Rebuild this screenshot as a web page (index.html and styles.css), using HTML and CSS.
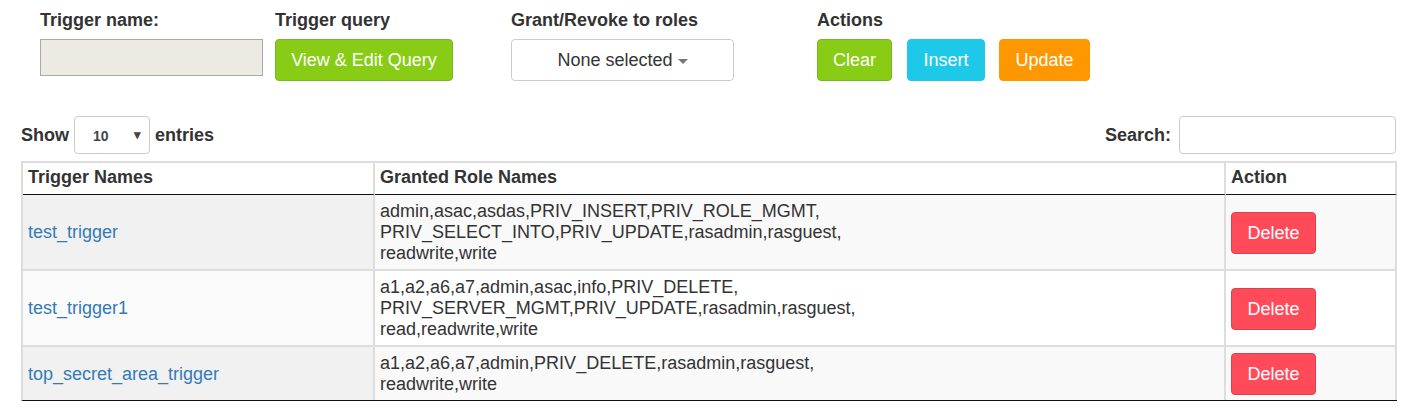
FILE: index.html
```html
<!DOCTYPE html>
<html>
<head>
<meta charset="utf-8">
<link rel="stylesheet" href="styles.css">
</head>
<body>
<div class="form-row">
  <div class="field f-name">
    <div class="lbl">Trigger name:</div>
    <input class="name-input" type="text" disabled>
  </div>
  <div class="field f-query">
    <div class="lbl">Trigger query</div>
    <button class="btn btn-green">View &amp; Edit Query</button>
  </div>
  <div class="field f-roles">
    <div class="lbl">Grant/Revoke to roles</div>
    <button class="multi">None selected <span class="caret"></span></button>
  </div>
  <div class="field f-actions">
    <div class="lbl">Actions</div>
    <div class="act-btns">
      <button class="btn btn-green btn-clear">Clear</button>
      <button class="btn btn-cyan btn-insert">Insert</button>
      <button class="btn btn-orange btn-update">Update</button>
    </div>
  </div>
</div>

<div class="dt-wrap">
  <div class="dt-top">
    <div class="length">Show <span class="sel"><span class="sel-val">10</span><span class="sel-arrow">&#9662;</span></span> entries</div>
    <div class="search">Search: <input class="search-input" type="text"></div>
  </div>
  <table class="dt">
    <colgroup>
      <col class="c1"><col class="c2"><col class="c3">
    </colgroup>
    <thead>
      <tr><th>Trigger Names</th><th>Granted Role Names</th><th>Action</th></tr>
    </thead>
    <tbody>
      <tr class="odd">
        <td class="sorted"><a href="#">test_trigger</a></td>
        <td>admin,asac,asdas,PRIV_INSERT,PRIV_ROLE_MGMT,<br>PRIV_SELECT_INTO,PRIV_UPDATE,rasadmin,rasguest,<br>readwrite,write</td>
        <td><button class="btn btn-red">Delete</button></td>
      </tr>
      <tr class="even">
        <td class="sorted"><a href="#">test_trigger1</a></td>
        <td>a1,a2,a6,a7,admin,asac,info,PRIV_DELETE,<br>PRIV_SERVER_MGMT,PRIV_UPDATE,rasadmin,rasguest,<br>read,readwrite,write</td>
        <td><button class="btn btn-red">Delete</button></td>
      </tr>
      <tr class="odd">
        <td class="sorted"><a href="#">top_secret_area_trigger</a></td>
        <td>a1,a2,a6,a7,admin,PRIV_DELETE,rasadmin,rasguest,<br>readwrite,write</td>
        <td><button class="btn btn-red">Delete</button></td>
      </tr>
    </tbody>
  </table>
</div>
</body>
</html>
```
FILE: styles.css
```css
* { box-sizing: border-box; }
body {
  margin: 0;
  font-family: "Liberation Sans", Arial, sans-serif;
  font-size: 18px;
  line-height: 21px;
  color: #333;
  background: #fff;
}
.form-row {
  display: flex;
  padding: 10px 0 0 40px;
}
.field { display: flex; flex-direction: column; }
.lbl {
  font-weight: bold;
  font-size: 18px;
  line-height: 20px;
  height: 20px;
  margin-bottom: 9px;
}
.f-name { width: 223px; margin-right: 12px; }
.f-query { width: 178px; margin-right: 58px; }
.f-roles { width: 223px; margin-right: 83px; }
.name-input {
  width: 223px;
  height: 37px;
  margin: 0;
  background: #ebebe4;
  border: 1px solid #a9a9a9;
  padding: 0 6px;
}
.btn {
  font-family: "Liberation Sans", Arial, sans-serif;
  font-size: 18px;
  line-height: 20px;
  color: #fff;
  height: 42px;
  padding: 0 15px;
  border-radius: 4px;
  border: 1px solid transparent;
  margin: 0;
  cursor: pointer;
}
.btn-green { background: #88cc16; border-color: #76b727; }
.btn-cyan { background: #1ec8e9; border-color: #1ec8e9; }
.btn-orange { background: #ff9701; border-color: #ff9701; }
.btn-red { background: #ff4a5a; border-color: #d9434e; }
.f-query .btn { width: 178px; padding: 0; }
.multi {
  width: 223px;
  height: 42px;
  margin: 0;
  background: #fff;
  border: 1px solid #ccc;
  border-radius: 4px;
  font-family: "Liberation Sans", Arial, sans-serif;
  font-size: 18px;
  color: #333;
  display: flex;
  align-items: center;
  justify-content: center;
  padding: 0;
}
.caret {
  display: inline-block;
  width: 0;
  height: 0;
  margin-left: 5px;
  margin-top: 2px;
  border-top: 5px solid #777;
  border-left: 5px solid transparent;
  border-right: 5px solid transparent;
}
.act-btns { display: flex; }
.btn-clear { width: 75px; padding: 0; margin-right: 15px; }
.btn-insert { width: 78px; padding: 0; margin-right: 14px; }
.btn-update { width: 91px; padding: 0; }

.dt-wrap { margin: 35px 6px 0 21px; }
.dt-top {
  display: flex;
  justify-content: space-between;
  align-items: center;
  height: 38px;
  font-weight: bold;
  font-size: 18px;
}
.length { display: flex; align-items: center; }
.sel {
  display: inline-flex;
  align-items: center;
  width: 76px;
  height: 38px;
  margin: 0 5px;
  border: 1px solid #ccc;
  border-radius: 4px;
  font-size: 14px;
  color: #444;
  padding: 2px 8px 0 18px;
  justify-content: space-between;
}
.sel-arrow { font-size: 13px; color: #444; margin-top: -3px; }
.search { display: flex; align-items: center; }
.search-input {
  width: 217px;
  height: 38px;
  margin: 0 0 0 8px;
  border: 1px solid #ccc;
  border-radius: 4px;
}
.dt {
  margin-top: 7px;
  width: 1374px;
  border-collapse: separate;
  border-spacing: 0;
  table-layout: fixed;
  border-left: 2px solid #ddd;
  border-bottom: 1px solid #111;
}
.c1 { width: 352px; }
.c2 { width: 851px; }
.c3 { width: 171px; }
.dt th {
  text-align: left;
  font-weight: bold;
  padding: 4px 5px 6px;
  border-top: 2px solid #ddd;
  border-right: 2px solid #ddd;
  border-bottom: 1px solid #111;
  background: #fff;
}
.dt td {
  padding: 6px 5px 5px;
  border-right: 2px solid #ddd;
  border-top: 2px solid #ddd;
  vertical-align: middle;
}
.dt tbody tr:first-child td { border-top: none; }
.dt tr.odd td { background: #f9f9f9; }
.dt tr.odd td.sorted { background: #f1f1f1; }
.dt tr.even td { background: #fff; }
.dt tr.even td.sorted { background: #fafafa; }
.dt a { color: #337ab7; text-decoration: none; }
.btn-red { width: 85px; padding: 0; }
```
